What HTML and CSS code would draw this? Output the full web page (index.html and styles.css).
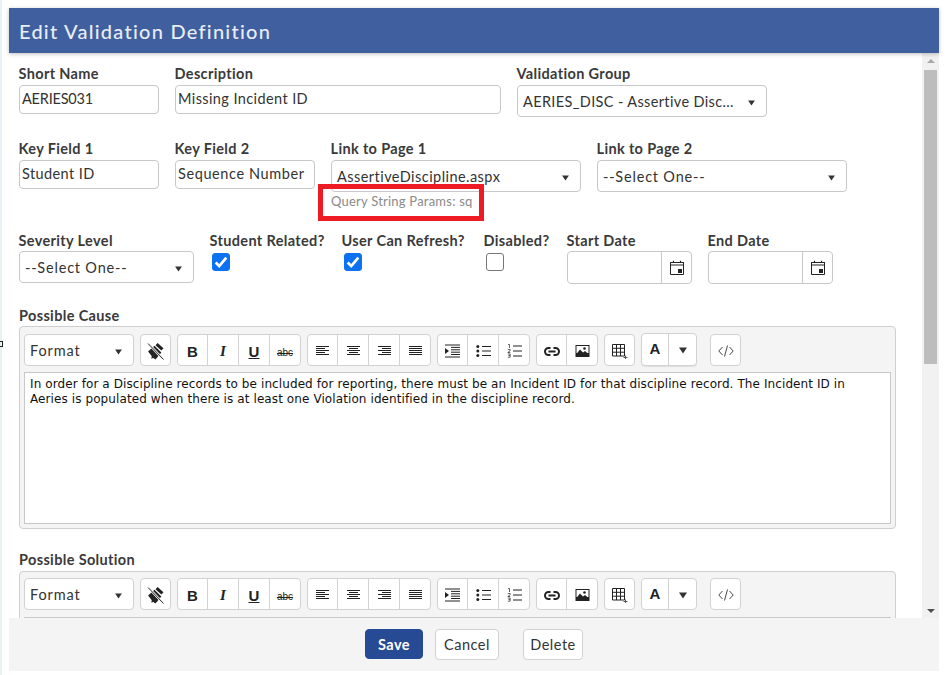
FILE: index.html
```html
<!DOCTYPE html>
<html lang="en">
<head>
<meta charset="utf-8">
<title>Edit Validation Definition</title>
<link rel="stylesheet" href="styles.css">
</head>
<body>
<svg class="defs" width="0" height="0" aria-hidden="true">
  <symbol id="i-caret" viewBox="0 0 10 7"><path d="M1 0.500h8L5 6.500z" fill="currentColor"/></symbol>
  <symbol id="i-eraser" viewBox="0 0 16 16"><path d="M10 0l5.500 5-2 2L8 2z" fill="#222"/><path d="M7 2.500L13.500 9 8 15.500 6 14l-2 .5 .5-2L1 8z" fill="#222"/><path d="M1.500 .8L15 15" stroke="#f4f4f4" stroke-width="2.200"/><path d="M1 .5L15.500 15.500" stroke="#222" stroke-width=".9"/></symbol>
  <symbol id="i-left" viewBox="0 0 13 10"><path d="M0 .5h13M0 2.500h9M0 4.500h13M0 6.500h9M0 8.500h13" stroke="#222" fill="none"/></symbol>
  <symbol id="i-center" viewBox="0 0 13 10"><path d="M0 .5h13M2 2.500h9M0 4.500h13M2 6.500h9M0 8.500h13" stroke="#222" fill="none"/></symbol>
  <symbol id="i-right" viewBox="0 0 13 10"><path d="M0 .5h13M4 2.500h9M0 4.500h13M4 6.500h9M0 8.500h13" stroke="#222" fill="none"/></symbol>
  <symbol id="i-just" viewBox="0 0 13 10"><path d="M0 .5h13M0 2.500h13M0 4.500h13M0 6.500h13M0 8.500h13" stroke="#222" fill="none"/></symbol>
  <symbol id="i-indent" viewBox="0 0 15 13"><path d="M0 .5h15M6 2.900h9M6 5.300h9M6 7.700h9M6 10h9M0 12.500h15" stroke="#222" fill="none"/><path d="M0 3.500l4 3-4 3z" fill="#222"/></symbol>
  <symbol id="i-ul" viewBox="0 0 15 13"><circle cx="1.800" cy="2" r="1.500" fill="#222"/><circle cx="1.800" cy="6.500" r="1.500" fill="#222"/><circle cx="1.800" cy="11" r="1.500" fill="#222"/><path d="M6 2h9M6 6.500h9M6 11h9" stroke="#222" fill="none"/></symbol>
  <symbol id="i-ol" viewBox="0 0 15 14"><path d="M1 .5h1.500v3.500M.8 5.500h2.400v1.200L.8 8.500h2.500M.8 10h2.400v3.200H.8M1.500 11.500h1.500" stroke="#222" stroke-width=".7" fill="none"/><path d="M6 2h9M6 7h9M6 12h9" stroke="#222" fill="none"/></symbol>
  <symbol id="i-link" viewBox="0 0 16 9"><path d="M6.500 1H4.500a3.500 3.500 0 0 0 0 7H6.500M9.500 1h2a3.500 3.500 0 0 1 0 7h-2M4.500 4.500h7" fill="none" stroke="#222" stroke-width="2"/></symbol>
  <symbol id="i-image" viewBox="0 0 15 13"><rect x=".5" y=".5" width="14" height="12" fill="#222"/><rect x="1.500" y="1.500" width="12" height="7" fill="#fff"/><path d="M1 10l4-5 3 3 2-1.500 4 3.500v2H1z" fill="#222"/><circle cx="9.500" cy="4" r="1.300" fill="#222"/></symbol>
  <symbol id="i-table" viewBox="0 0 16 15"><path d="M.5 .5h12v11.500H.5zM4.500 .5v11.500M8.500 .5v11.500M.5 4.300h12M.5 8.200h12" fill="none" stroke="#222"/><path d="M11.500 13.500h4M13.500 11.500v4" stroke="#555" fill="none"/></symbol>
  <symbol id="i-code" viewBox="0 0 16 12"><path d="M4.500 2L.8 6l3.700 4M11.500 2l3.700 4-3.700 4M9.500 .5L6.500 11.500" fill="none" stroke="#333" stroke-width=".9"/></symbol>
  <symbol id="i-cal" viewBox="0 0 14 15"><path d="M.5 2.500h13v12H.5z" fill="#fff" stroke="#222"/><path d="M.5 2.500h13V5H.5z" fill="none" stroke="#222"/><path d="M3.500 .8v2M10.500 .8v2" stroke="#222" stroke-width="1.200"/><rect x="8" y="9" width="4" height="4" fill="#222"/></symbol>
  <symbol id="i-check" viewBox="0 0 18 18"><path d="M3 9.500l4 4 8-9.500" fill="none" stroke="#fff" stroke-width="3"/></symbol>
</svg>

<span class="stray"></span>

<main class="modal">
  <header class="modal-head"><h1>Edit Validation Definition</h1></header>

  <div class="modal-body">
    <form class="form">
      <div class="row row-1">
        <div class="field w-short"><label>Short Name</label><div class="input caps">AERIES031</div></div>
        <div class="field w-desc"><label>Description</label><div class="input">Missing Incident ID</div></div>
        <div class="field w-group"><label>Validation Group</label>
          <div class="select"><span>AERIES_DISC - Assertive Disc...</span><svg class="caret"><use href="#i-caret"/></svg></div></div>
      </div>

      <div class="row row-2">
        <div class="field w-short"><label>Key Field 1</label><div class="input">Student ID</div></div>
        <div class="field w-key2"><label>Key Field 2</label><div class="input wide">Sequence Number</div></div>
        <div class="field w-link"><label>Link to Page 1</label>
          <div class="select"><span class="sel-page">AssertiveDiscipline.aspx</span><svg class="caret"><use href="#i-caret"/></svg></div>
          <div class="hint">Query String Params: sq</div>
          <div class="callout"></div>
        </div>
        <div class="field w-link"><label>Link to Page 2</label>
          <div class="select"><span class="sel-one">--Select One--</span><svg class="caret"><use href="#i-caret"/></svg></div></div>
      </div>

      <div class="row row-3">
        <div class="field w-sev"><label>Severity Level</label>
          <div class="select"><span class="sel-one">--Select One--</span><svg class="caret"><use href="#i-caret"/></svg></div></div>
        <div class="field w-stu"><label>Student Related?</label><span class="check on"><svg><use href="#i-check"/></svg></span></div>
        <div class="field w-ref"><label>User Can Refresh?</label><span class="check on"><svg><use href="#i-check"/></svg></span></div>
        <div class="field w-dis"><label>Disabled?</label><span class="check"></span></div>
        <div class="field w-date"><label>Start Date</label><div class="date"><span class="date-in"></span><span class="date-btn"><svg><use href="#i-cal"/></svg></span></div></div>
        <div class="field w-date"><label>End Date</label><div class="date"><span class="date-in"></span><span class="date-btn"><svg><use href="#i-cal"/></svg></span></div></div>
      </div>

      <section class="rte-field">
        <label>Possible Cause</label>
        <div class="rte">
          <div class="toolbar">
            <div class="combo"><span>Format</span><svg class="caret"><use href="#i-caret"/></svg></div>
            <div class="grp"><button type="button" class="tb"><svg class="ic-erase"><use href="#i-eraser"/></svg></button></div>
            <div class="grp"><button type="button" class="tb t-b">B</button><button type="button" class="tb t-i">I</button><button type="button" class="tb t-u">U</button><button type="button" class="tb t-s">abc</button></div>
            <div class="grp"><button type="button" class="tb"><svg class="ic-al"><use href="#i-left"/></svg></button><button type="button" class="tb"><svg class="ic-al"><use href="#i-center"/></svg></button><button type="button" class="tb"><svg class="ic-al"><use href="#i-right"/></svg></button><button type="button" class="tb"><svg class="ic-al"><use href="#i-just"/></svg></button></div>
            <div class="grp"><button type="button" class="tb"><svg class="ic-li"><use href="#i-indent"/></svg></button><button type="button" class="tb"><svg class="ic-li"><use href="#i-ul"/></svg></button><button type="button" class="tb"><svg class="ic-li"><use href="#i-ol"/></svg></button></div>
            <div class="grp"><button type="button" class="tb"><svg class="ic-link"><use href="#i-link"/></svg></button><button type="button" class="tb"><svg class="ic-li"><use href="#i-image"/></svg></button></div>
            <div class="grp"><button type="button" class="tb"><svg class="ic-tbl"><use href="#i-table"/></svg></button></div>
            <div class="grp grp-color lift"><button type="button" class="tb t-a">A</button><button type="button" class="tb tb-c"><svg class="caret"><use href="#i-caret"/></svg></button></div>
            <div class="grp grp-code"><button type="button" class="tb"><svg class="ic-code"><use href="#i-code"/></svg></button></div>
          </div>
          <div class="rte-content">In order for a Discipline records to be included for reporting, there must be an Incident ID for that discipline record. The Incident ID in Aeries is populated when there is at least one Violation identified in the discipline record.</div>
        </div>
      </section>

      <section class="rte-field second">
        <label>Possible Solution</label>
        <div class="rte">
          <div class="toolbar">
            <div class="combo"><span>Format</span><svg class="caret"><use href="#i-caret"/></svg></div>
            <div class="grp"><button type="button" class="tb"><svg class="ic-erase"><use href="#i-eraser"/></svg></button></div>
            <div class="grp"><button type="button" class="tb t-b">B</button><button type="button" class="tb t-i">I</button><button type="button" class="tb t-u">U</button><button type="button" class="tb t-s">abc</button></div>
            <div class="grp"><button type="button" class="tb"><svg class="ic-al"><use href="#i-left"/></svg></button><button type="button" class="tb"><svg class="ic-al"><use href="#i-center"/></svg></button><button type="button" class="tb"><svg class="ic-al"><use href="#i-right"/></svg></button><button type="button" class="tb"><svg class="ic-al"><use href="#i-just"/></svg></button></div>
            <div class="grp"><button type="button" class="tb"><svg class="ic-li"><use href="#i-indent"/></svg></button><button type="button" class="tb"><svg class="ic-li"><use href="#i-ul"/></svg></button><button type="button" class="tb"><svg class="ic-li"><use href="#i-ol"/></svg></button></div>
            <div class="grp"><button type="button" class="tb"><svg class="ic-link"><use href="#i-link"/></svg></button><button type="button" class="tb"><svg class="ic-li"><use href="#i-image"/></svg></button></div>
            <div class="grp"><button type="button" class="tb"><svg class="ic-tbl"><use href="#i-table"/></svg></button></div>
            <div class="grp grp-color"><button type="button" class="tb t-a">A</button><button type="button" class="tb tb-c"><svg class="caret"><use href="#i-caret"/></svg></button></div>
            <div class="grp grp-code"><button type="button" class="tb"><svg class="ic-code"><use href="#i-code"/></svg></button></div>
          </div>
          <div class="rte-content"></div>
        </div>
      </section>
    </form>

    <div class="scrollbar">
      <span class="arrow up"></span>
      <span class="thumb"></span>
      <span class="arrow down"></span>
    </div>
  </div>

  <footer class="modal-foot">
    <button type="button" class="btn primary">Save</button>
    <button type="button" class="btn cancel">Cancel</button>
    <button type="button" class="btn delete">Delete</button>
  </footer>
</main>
</body>
</html>
```

FILE: styles.css
```css
* { box-sizing: border-box; }
html, body { height: 100%; }
body {
  margin: 0;
  padding: 8px 10px 4px 9px;
  height: 675px;
  overflow: hidden;
  background: #fff linear-gradient(180deg, #e6f2f7, #e6f5ee) no-repeat 0 0 / 2px 100%;
  font-family: "Lato", "Open Sans", sans-serif;
  color: #333;
}
.defs { position: absolute; }
.stray { position: absolute; left: 0; top: 341px; width: 3px; height: 6px; border: 1px solid #222; border-left: 0; }

.modal { height: 663px; display: flex; flex-direction: column; background: #fff; }
.modal-head {
  flex: none; height: 45px; background: #3f5f9f; display: flex; align-items: center; padding-left: 10px;
  box-shadow: 0 1px 4px rgba(0,0,0,.25); position: relative; z-index: 1;
}
.modal-head h1 { margin: 0; font-size: 20px; font-weight: 500; color: #e9edf5; letter-spacing: 1.25px; }

.modal-body { flex: 1; min-height: 0; display: flex; overflow: hidden; }
.form { flex: 1; min-width: 0; padding: 13px 0 0 10px; overflow: hidden; }

.row { display: flex; align-items: flex-start; }
.row-1 { height: 75px; }
.row-2 { height: 92px; }
.row-3 { height: 75px; }

.field { position: relative; flex: none; }
.field label, .rte-field label {
  display: block; line-height: 16px; font-size: 14.500px; font-weight: 700; color: #3a3a3a; white-space: nowrap; letter-spacing: .35px;
}
.field label { height: 19px; margin-left: -.5px; }
.row-3 .field label { height: 18px; }
.w-short { width: 156px; }
.w-desc { width: 342px; }
.w-group { width: 250px; }
.w-key2 { width: 156px; }
.w-link { width: 266px; }
.w-link .select { width: 250px; }
.w-desc .input { width: 326px; }
.w-key2 .input { width: 140px; }
.w-short .input { width: 140px; }
.w-sev { width: 191px; }
.w-sev .select { width: 175px; }
.w-stu { width: 132px; }
.w-ref { width: 142px; }
.w-dis { width: 83px; }
.w-date { width: 141px; }

.input {
  height: 29px; border: 1px solid #c8c8c8; border-radius: 4px; background: #fff;
  font-size: 14.500px; line-height: 26px; padding-left: 2px; letter-spacing: .4px; color: #333; white-space: nowrap;
}
.input.caps { letter-spacing: -.2px; }
.input.wide { letter-spacing: .6px; }
.select {
  height: 32px; border: 1px solid #c8c8c8; border-radius: 4px; background: #fff; display: flex; align-items: center;
  justify-content: space-between; padding: 0 10px 0 5px; font-size: 14.500px; letter-spacing: .36px; color: #333; white-space: nowrap;
}
.sel-page { letter-spacing: .45px; }
.sel-one { letter-spacing: .8px; }
.caret { width: 9px; height: 6px; color: #333; flex: none; display: block; margin-top: 3px; }
.hint { font-size: 13px; letter-spacing: .22px; color: #8a8a8a; margin-top: 1px; line-height: 17px; white-space: nowrap; }
.callout { position: absolute; left: -13px; top: 43px; width: 166px; height: 37px; border: 5px solid #ed1c24; pointer-events: none; }

.check { display: block; width: 18px; height: 18px; margin: 2px 0 0 2px; border: 1px solid #777; border-radius: 3px; background: #fff; }
.check.on { background: #0d72f1; border-color: #0d72f1; }
.check svg { display: block; width: 16px; height: 16px; }

.date { width: 125px; height: 33px; border: 1px solid #c8c8c8; border-radius: 4px; display: flex; background: #fff; }
.date-in { flex: 1; }
.date-btn { width: 30px; border-left: 1px solid #c8c8c8; display: flex; align-items: center; justify-content: center; }
.date-btn svg { width: 14px; height: 15px; display: block; }

.rte-field { width: 877px; }
.rte-field label { height: 18px; }
.rte-field.second { margin-top: 23px; }
.rte-field.second label { height: 19px; }
.rte-field.second .rte { padding-top: 6px; }
.rte-field.second .toolbar { margin-bottom: 7px; }
.rte { background: #f4f4f4; border: 1px solid #cfcfcf; border-radius: 4px; padding: 7px 4px 4px; }
.toolbar { display: flex; align-items: center; gap: 6px; height: 32px; margin-bottom: 6px; }
.combo {
  width: 110px; height: 32px; background: #fff; border: 1px solid #d2d2d2; border-radius: 4px; display: flex; align-items: center;
  justify-content: space-between; padding: 0 10px 0 5px; font-size: 14.500px; letter-spacing: .9px; color: #333;
}
.grp { display: flex; height: 32px; background: #fff; border: 1px solid #d2d2d2; border-radius: 4px; }
.tb {
  width: 31px; padding: 2px 0 0; margin: 0; border: 0; border-left: 1px solid #d2d2d2; background: none; display: flex; align-items: center;
  justify-content: center; color: #222; font-family: "Liberation Sans", sans-serif;
}
.tb:first-child { border-left: 0; width: 29px; }
.t-b { font-size: 15px; font-weight: 700; }
.t-i { font-size: 15px; font-style: italic; font-family: "Liberation Serif", serif; font-weight: 700; }
.t-u { font-size: 15px; font-weight: 700; text-decoration: underline; }
.t-s { font-size: 10px; text-decoration: line-through; padding-top: 5px; }
.grp .t-a { font-size: 15px; font-weight: 700; padding: 0 0 2px; width: 26px; }
.grp-color .tb-c { width: 28px; }
.tb-c .caret { width: 10px; height: 7px; margin-top: 0; }
.grp-color.lift { margin-top: -1px; height: 33px; box-shadow: 0 1px 1px rgba(0,0,0,.08); }
.grp-code { margin-left: 7px; }
.ic-erase { width: 17px; height: 17px; }
.ic-al { width: 13px; height: 10px; }
.ic-li { width: 15px; height: 14px; }
.ic-link { width: 16px; height: 9px; }
.ic-tbl { width: 16px; height: 15px; }
.ic-code { width: 16px; height: 12px; }
.rte-content {
  height: 152px; background: #fff; border: 1px solid #c8c8c8; padding: 4px 20px 4px 5px;
  font-family: "DejaVu Sans", sans-serif; font-size: 12px; line-height: 15px; color: #111; letter-spacing: .095px;
}

.scrollbar { flex: none; width: 17px; background: #f1f1f1; display: flex; flex-direction: column; align-items: center; padding: 0; position: relative; }
.thumb { display: block; width: 13px; height: 294px; background: #bdbdbd; margin-top: 0; }
.arrow { display: block; width: 0; height: 0; border-left: 4px solid transparent; border-right: 4px solid transparent; }
.arrow.up { border-bottom: 4px solid #a8a8a8; margin: 6px 0 7px; }
.arrow.down { border-top: 4px solid #505050; margin-top: auto; margin-bottom: 5px; }

.modal-foot { flex: none; height: 53px; background: #f4f4f4; display: flex; align-items: center; padding-left: 356px; padding-bottom: 1px; position: relative; z-index: 1; }
.btn {
  height: 31px; border: 1px solid #d2d2d2; border-radius: 4px; background: #fff; font-family: inherit; font-size: 14.500px; letter-spacing: .5px; color: #333; padding: 0;
}
.btn.primary { width: 58px; background: #264a94; border-color: #264a94; color: #fff; font-weight: 700; margin-right: 12px; height: 30px; }
.btn.cancel { width: 64px; margin-right: 24px; }
.btn.delete { width: 60px; }
```
